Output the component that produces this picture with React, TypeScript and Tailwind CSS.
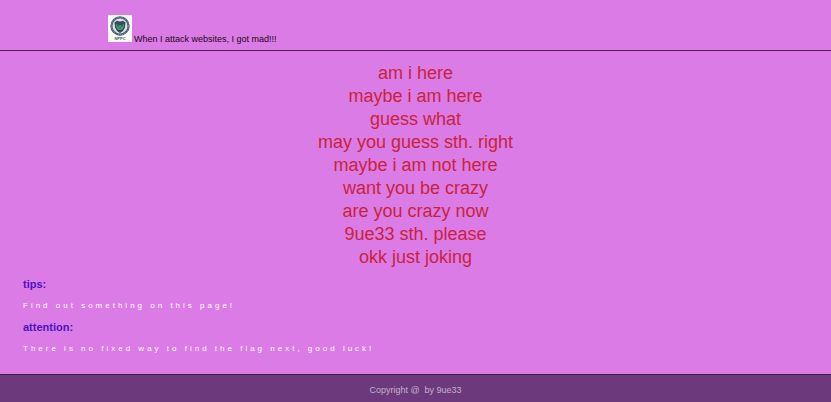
const lines = [
  'am i here',
  'maybe i am here',
  'guess what',
  'may you guess sth. right',
  'maybe i am not here',
  'want you be crazy',
  'are you crazy now',
  '9ue33 sth. please',
  'okk just joking',
];

const notes = [
  { title: 'tips:', text: 'Find out something on this page!' },
  { title: 'attention:', text: 'There is no fixed way to find the flag next, good luck!' },
];

function Logo() {
  return (
    <svg viewBox="0 0 24 27" className="mb-0.5 h-[27px] w-6 shrink-0" role="img" aria-label="NPPC">
      <rect width="24" height="27" fill="#fbfafb" />
      <circle cx="12" cy="11" r="8.6" fill="#dfe6e6" stroke="#455866" strokeWidth="2.2" />
      <circle cx="12" cy="11" r="8.6" fill="none" stroke="#a4b0b7" strokeWidth="0.8" strokeDasharray="1 1.1" />
      <path d="M6.5 7.5 9 5.8l3 .7 3-.7 2.5 1.7-.5 5L15 16l-3 2-3-2-2-3.5Z" fill="#344d57" />
      <path d="m8 9 3 1.5h2L16 9l-.5 3.5-2 2.5h-3l-2-2.5Z" fill="#4da284" />
      <path d="m9 10.5 2 1m4-1-2 1M12 12v2m-1.5 1.500h3" fill="none" stroke="#203942" strokeWidth="0.8" />
      <text x="12" y="25" textAnchor="middle" fontSize="4" fontWeight="700" fill="#4c5960" fontFamily="Liberation Sans, sans-serif">
        NPPC
      </text>
    </svg>
  );
}

export default function App() {
  return (
    <div className="flex min-h-screen flex-col bg-[#db7be5] font-['Liberation_Sans',Arial,sans-serif]">
      <header className="border-b border-[#4b2352] px-[13%] pt-[15px] pb-1.5">
        <div className="flex items-end gap-0.5">
          <Logo />
          <h1 className="text-[9px] leading-[10px] text-[#1c0820]">When I attack websites, I got mad!!!</h1>
        </div>
      </header>
      <main className="grow pt-[11px]">
        <div className="text-center text-[18px] leading-[23px] text-[#c8233d]">
          {lines.map((line) => (
            <p key={line}>{line}</p>
          ))}
        </div>
        <div className="flex flex-col gap-[9px] px-[23px] pt-[9px]">
          {notes.map((note) => (
            <section key={note.title}>
              <h2 className="text-[11px] leading-3 font-bold text-[#4a14c4]">{note.title}</h2>
              <p className="pt-2.5 text-[8px] leading-3 tracking-[3px] text-white">{note.text}</p>
            </section>
          ))}
        </div>
      </main>
      <footer className="border-t border-[#3d1a48] bg-[#6d397d] pt-[9px] pb-1.5 text-center text-[9px] leading-3 whitespace-pre text-[#c5b0cb]">
        {'Copyright @  by 9ue33'}
      </footer>
    </div>
  );
}
